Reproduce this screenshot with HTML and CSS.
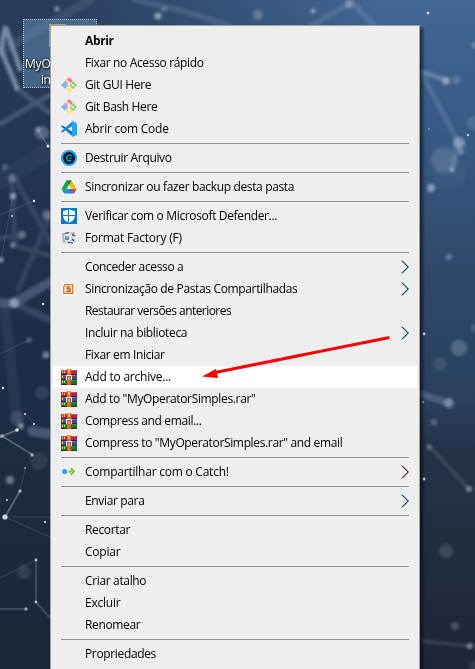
FILE: index.html
```html
<!DOCTYPE html>
<html lang="pt-BR">
<head>
<meta charset="utf-8">
<title>Menu de contexto</title>
<link rel="stylesheet" href="styles.css">
</head>
<body>
<svg class="defs" width="0" height="0">
  <defs>
    <symbol id="git" viewBox="0 0 16 16"><path fill="#ff7d7d" d="M8 0l4 4-2 2L5.500 2.500z"/><path fill="#ff7d7d" d="M4.500 3.500L7.200 6.200 6.200 7.200 3.500 4.500z"/><path fill="#80b3ff" d="M3.300 4.700L7.200 8.300 3.800 11.800 0 8z"/><path fill="#87d354" d="M12.300 4.300L16 8l-4 4-3.700-3.700z"/><path fill="#ffe680" d="M8 8.800l3.800 3.500L8 16l-3.800-3.700z"/><path d="M8.500 5v5M9.500 6l2 2" stroke="#eee" stroke-width="1" fill="none"/><circle cx="12" cy="8.200" r="1.200" fill="#eee"/><circle cx="8.300" cy="10.600" r="1" fill="#eee"/></symbol>
    <symbol id="code" viewBox="0 0 16 16"><path fill="#0078c8" d="M1.200 4.200L0 5.200l10.800 9.600L12 11.300z"/><path fill="#1a86cc" d="M1.200 11.800L0 10.600 10.800 1l1.200 3.600z"/><path fill="#25a5ee" d="M11 0l4.200 1.800.8.900v10.600l-.8.900L11 16z"/></symbol>
    <symbol id="shred" viewBox="0 0 16 16"><circle cx="8" cy="8" r="8" fill="#10a8f4"/><circle cx="8" cy="8" r="6" fill="#101820"/><path d="M10.800 6.200C9.800 4.400 6.700 4.700 5.800 7.300S7 11.800 10 10.400" fill="none" stroke="#12a9f5" stroke-width="1.300"/><path d="M8.300 8.300h2.400" stroke="#12a9f5"/></symbol>
    <symbol id="drive" viewBox="0 0 16 16"><path fill="#0fa958" d="M5.300 1.500L8 6 3.200 14.600.5 10z"/><path fill="#ffba00" d="M5.300 1.500h5.200l5 8.500H10.300z"/><path fill="#2684fc" d="M3.200 14.600L5.700 10h9.800l-2.600 4.600z"/><path fill="#00832d" d="M5.300 1.500h5.200L8 6z"/><path fill="#ea4335" d="M10.300 10h5.200l-2.600 4.600z"/><path fill="#eee" d="M8 6.200l2.200 3.800H5.700z"/></symbol>
    <symbol id="shield" viewBox="0 0 16 16"><path fill="#0078d7" d="M0 0h16v16H0z"/><path fill="#fff" d="M8 1c1.500 1.200 3.500 1.800 6 1.900v4.600c0 3.400-2.300 5.800-6 7.500-3.700-1.700-6-4.100-6-7.500V2.900C4.500 2.800 6.500 2.200 8 1z"/><path stroke="#0078d7" d="M7.500 1v14M2 7.500h12"/></symbol>
    <symbol id="factory" viewBox="0 0 16 16"><path fill="#cdd4d9" d="M1 3l4-1 9 1 1 9-3 1.500H2z"/><path fill="#a7b1b7" d="M1 3h3v9H2zM9 3l5-1-2 4z"/><circle cx="6.500" cy="7.500" r="3.600" fill="#f5f7fa"/><circle cx="6" cy="8" r="2.300" fill="#58789d"/><circle cx="6" cy="7.500" r="1" fill="#c2d9ec"/><path d="M4 3.500l4-1M10 4l4 2M11 9l2 2M7 12.500l5 .5" stroke="#3c464f" stroke-width="1.200"/><path d="M9 3l2 2M12 8l2-1" stroke="#fff"/></symbol>
    <symbol id="sync" viewBox="0 0 16 16"><path fill="#fff" d="M1 2h13v13H1z"/><path fill="#f9ead8" stroke="#e46c0a" stroke-width="1.200" d="M4.600 3.500h7.200v8.800H2.700V5.600z"/><path d="M9.400 5.900H6.300v2h2.600v2.300H5.400" fill="none" stroke="#c2560c" stroke-width="1.400"/></symbol>
    <symbol id="rar" viewBox="0 0 16 16"><path fill="#b82052" d="M0 1h16v4H0z"/><path fill="#e34b7e" d="M1 1h14v1H1z"/><path fill="#4547a8" d="M0 6h16v4H0z"/><path fill="#7779cf" d="M1 6h14v1H1z"/><path fill="#087c2c" d="M0 11h16v4H0z"/><path fill="#22a648" d="M1 11h14v1H1z"/><path fill="#30252d" d="M0 5h16v1H0zM0 10h16v1H0zM0 15h16v1H0z"/><path fill="#f2d02c" d="M1 2h1v2H1zM1 7h1v2H1zM1 12h1v2H1zM3 2h1v2H3zM3 12h1v2H3z"/><path fill="#e16a18" d="M6 0h4v16H6z"/><path fill="#f3b35e" d="M7 0h2v4H7z"/><path fill="#a95530" d="M5 6h6v5H5z"/><path d="M5.500 11V6.500h5V11M8 8v3" fill="none" stroke="#fff" stroke-width="1"/></symbol>
    <symbol id="catch" viewBox="0 0 16 16"><circle cx="3.700" cy="7.500" r="2.600" fill="#21a6ef"/><path d="M7.500 7.500H13M9.700 4.200L13 7.500l-3.300 3.300" fill="none" stroke="#80c934" stroke-width="1.900"/></symbol>
    <symbol id="chevron" viewBox="0 0 10 14"><path d="M1.200 .7L7.500 7l-6.300 6.300" fill="none" stroke="#e6b08a"/><path d="M2.500 .7L8.800 7l-6.300 6.300" fill="none" stroke="#4aa3ee"/><path d="M1.800 .7L8.100 7l-6.300 6.300" fill="none" stroke="currentColor"/></symbol>
  </defs>
</svg>

<svg class="wallpaper" viewBox="0 0 475 669" preserveAspectRatio="none">
  <defs>
    <linearGradient id="skyLeft" x1="0" y1="0" x2="0" y2="1"><stop offset="0" stop-color="#293d5c"/><stop offset=".25" stop-color="#223553"/><stop offset=".5" stop-color="#1e2e48"/><stop offset="1" stop-color="#1c2639"/></linearGradient>
    <linearGradient id="skyRight" x1="0" y1="0" x2="0" y2="1"><stop offset="0" stop-color="#426794"/><stop offset=".2" stop-color="#375a85"/><stop offset=".4" stop-color="#30496b"/><stop offset=".6" stop-color="#29405f"/><stop offset=".68" stop-color="#253248"/><stop offset="1" stop-color="#1e2636"/></linearGradient>
    <linearGradient id="fade"><stop offset=".1" stop-color="#000"/><stop offset=".8" stop-color="#fff"/></linearGradient>
    <mask id="across"><path fill="url(#fade)" d="M0 0h475v669H0z"/></mask>
    <filter id="soft" x="-20%" y="-20%" width="140%" height="140%"><feGaussianBlur stdDeviation="1.500"/></filter>
    <filter id="fine"><feGaussianBlur stdDeviation=".5"/></filter>
  </defs>
  <path fill="url(#skyLeft)" d="M0 0h475v669H0z"/>
  <path fill="url(#skyRight)" mask="url(#across)" d="M0 0h475v669H0z"/>
  <g filter="url(#soft)" stroke="#a8bdd8" fill="none" stroke-linecap="round">
    <path d="M5 28l-4 22 16 38M6 28l14 41" stroke-width="5" opacity=".6"/>
    <path d="M16 88l34 25M0 124l50-29" stroke-width="5" opacity=".24"/>
    <path d="M0 52L90 0" stroke-width="9" opacity=".13"/>
    <path d="M135 0l45 10 50 16M310 27l38-23M352 2l22 24" stroke-width="6" opacity=".18"/>
    <path d="M0 180l50-30" stroke-width="18" opacity=".06"/>
    <path d="M12 178l3 65M16 180l34 62M18 290L50 215M13 245l37 11M0 238l22-3" stroke-width="5" opacity=".15"/>
    <path d="M0 303h14l36-21" stroke-width="9" opacity=".28"/>
    <path d="M14 303l36 17" stroke-width="7" opacity=".17"/>
    <path d="M5 310l12 110" stroke-width="11" opacity=".08"/>
    <path d="M32 431l18 3" stroke-width="10" opacity=".3"/>
    <path d="M423 72l23 8" stroke-width="5" opacity=".4"/>
    <path d="M423 76l36 67-7 27" stroke-width="5" opacity=".2"/>
    <path d="M421 394l27 9" stroke-width="7" opacity=".27"/>
    <path d="M430 447l39 42M421 641l49 5" stroke-width="3" opacity=".2"/>
  </g>
  <g filter="url(#soft)" fill="#acbdd6">
    <circle cx="57" cy="9" r="2.500" opacity=".7"/><circle cx="158" cy="16" r="3.500" opacity=".75"/><circle cx="164" cy="9" r="2.500" opacity=".4"/><circle cx="258" cy="15" r="5" opacity=".35"/><circle cx="313" cy="11" r="2.500" opacity=".7"/><circle cx="349" cy="4" r="4" opacity=".5"/>
    <circle cx="42" cy="133" r="7" opacity=".35"/><circle cx="38" cy="130" r="3" opacity=".6"/>
    <circle cx="5" cy="167" r="3" opacity=".35"/><circle cx="12" cy="178" r="4" opacity=".35"/><circle cx="13" cy="196" r="3" opacity=".8"/><circle cx="47" cy="215" r="5" opacity=".4"/><circle cx="22" cy="235" r="4" opacity=".4"/><circle cx="13" cy="245" r="2.500" opacity=".6"/><circle cx="1" cy="260" r="2.500" opacity=".8"/><circle cx="14" cy="303" r="5" opacity=".6"/>
    <circle cx="29" cy="340" r="2.500" opacity=".45"/><circle cx="46" cy="355" r="3.500" opacity=".6"/><circle cx="42" cy="393" r="7" opacity=".15"/><circle cx="17" cy="418" r="7" opacity=".18"/><circle cx="21" cy="426" r="3" opacity=".7"/><circle cx="39" cy="461" r="9" opacity=".12"/><circle cx="10" cy="480" r="4" opacity=".55"/><circle cx="24" cy="572" r="7" opacity=".16"/>
    <circle cx="446" cy="81" r="4" opacity=".6"/><circle cx="456" cy="80" r="4" opacity=".3"/><circle cx="459" cy="143" r="6" opacity=".6"/><circle cx="461" cy="152" r="3" opacity=".5"/><circle cx="444" cy="160" r="13" opacity=".22"/><circle cx="450" cy="174" r="16" opacity=".05"/><circle cx="452" cy="170" r="2" opacity=".8"/><circle cx="431" cy="188" r="4" opacity=".7"/><circle cx="474" cy="123" r="7" opacity=".2"/><circle cx="475" cy="45" r="3" opacity=".5"/>
    <circle cx="449" cy="257" r="3" opacity=".45"/><circle cx="459" cy="348" r="8" opacity=".3"/><circle cx="440" cy="364" r="7" opacity=".14"/><circle cx="475" cy="328" r="4" opacity=".25"/><circle cx="449" cy="403" r="5" opacity=".5"/><circle cx="434" cy="422" r="3" opacity=".4"/><circle cx="429" cy="447" r="2.500" opacity=".5"/><circle cx="469" cy="489" r="3" opacity=".6"/><circle cx="446" cy="551" r="7" opacity=".2"/><circle cx="455" cy="626" r="4" opacity=".28"/><circle cx="470" cy="646" r="3" opacity=".6"/><circle cx="475" cy="666" r="6" opacity=".15"/>
  </g>
  <g filter="url(#fine)" stroke="#98a7be" fill="none">
    <path d="M0 215l34-14M13 196L1 260M0 354l29-14M25 413l9 11" opacity=".22"/>
    <path d="M0 437l17-7M2 436l31 19M5 517l15-26" stroke-width="2" opacity=".45"/><path d="M20 491l6-25M5 517h45M5 517l45 20M0 578l36-18" opacity=".22"/><path d="M36 560v42l14 16M0 609h26" stroke-width="2" opacity=".27"/>
    <path d="M38 130l10 16" opacity=".5"/>
  </g>
  <g filter="url(#fine)" fill="#dbe5f2">
    <circle cx="48" cy="146" r="1.500"/><circle cx="34" cy="201" r="1.200"/><circle cx="12" cy="216" r=".9"/><circle cx="43" cy="304" r="1.200"/><circle cx="3" cy="388" r="1.200"/><circle cx="25" cy="414" r="1"/><circle cx="34" cy="424" r="1"/><circle cx="17" cy="430" r="1.800"/><circle cx="2" cy="436" r="2" opacity=".5"/><circle cx="32" cy="455" r="1.800" opacity=".6"/><circle cx="25" cy="468" r="1" opacity=".6"/><circle cx="20" cy="491" r="1.800" opacity=".6"/><circle cx="7" cy="500" r=".9"/><circle cx="5" cy="517" r="2.600" opacity=".9"/><circle cx="45" cy="522" r="1.100"/><circle cx="36" cy="560" r="1.400" opacity=".8"/><circle cx="36" cy="602" r="1.400" opacity=".8"/><circle cx="26" cy="609" r="1.700" opacity=".6"/>
    <circle cx="428" cy="13" r="1.300"/><circle cx="468" cy="135" r="1.300" opacity=".8"/><circle cx="424" cy="334" r="1.400"/><circle cx="423" cy="402" r="1.300" opacity=".5"/><circle cx="424" cy="479" r="1.400"/><circle cx="429" cy="129" r="1" opacity=".4"/>
  </g>
</svg>

<div class="shortcut"><span class="folder"></span><span class="label">MyO</span><span class="label second">in</span></div>

<nav class="menu">
  <div class="item default"><i></i><span>Abrir</span></div>
  <div class="item"><i></i><span>Fixar no Acesso rápido</span></div>
  <div class="item"><svg><use href="#git"/></svg><span>Git GUI Here</span></div>
  <div class="item"><svg><use href="#git"/></svg><span>Git Bash Here</span></div>
  <div class="item wide"><svg><use href="#code"/></svg><span>Abrir com Code</span></div>
  <hr>
  <div class="item"><svg><use href="#shred"/></svg><span>Destruir Arquivo</span></div>
  <hr>
  <div class="item"><svg><use href="#drive"/></svg><span>Sincronizar ou fazer backup desta pasta</span></div>
  <hr>
  <div class="item"><svg><use href="#shield"/></svg><span>Verificar com o Microsoft Defender...</span></div>
  <div class="item wide"><svg><use href="#factory"/></svg><span>Format Factory (F)</span></div>
  <hr>
  <div class="item"><i></i><span>Conceder acesso a</span><svg class="chevron"><use href="#chevron"/></svg></div>
  <div class="item"><svg><use href="#sync"/></svg><span>Sincronização de Pastas Compartilhadas</span><svg class="chevron"><use href="#chevron"/></svg></div>
  <div class="item tight"><i></i><span>Restaurar versões anteriores</span></div>
  <div class="item"><i></i><span>Incluir na biblioteca</span><svg class="chevron"><use href="#chevron"/></svg></div>
  <div class="item"><i></i><span>Fixar em Iniciar</span></div>
  <div class="item selected wide"><svg><use href="#rar"/></svg><span>Add to archive...</span></div>
  <div class="item"><svg><use href="#rar"/></svg><span>Add to "MyOperatorSimples.rar"</span></div>
  <div class="item"><svg><use href="#rar"/></svg><span>Compress and email...</span></div>
  <div class="item"><svg><use href="#rar"/></svg><span>Compress to "MyOperatorSimples.rar" and email</span></div>
  <hr>
  <div class="item wide"><svg><use href="#catch"/></svg><span>Compartilhar com o Catch!</span><svg class="chevron red"><use href="#chevron"/></svg></div>
  <hr>
  <div class="item"><i></i><span>Enviar para</span><svg class="chevron"><use href="#chevron"/></svg></div>
  <hr>
  <div class="item"><i></i><span>Recortar</span></div>
  <div class="item wide"><i></i><span>Copiar</span></div>
  <hr>
  <div class="item"><i></i><span>Criar atalho</span></div>
  <div class="item wide"><i></i><span>Excluir</span></div>
  <div class="item"><i></i><span>Renomear</span></div>
  <hr>
  <div class="item"><i></i><span>Propriedades</span></div>
</nav>

<svg class="pointer" viewBox="0 0 190 46"><path d="M187.300 2.700L14 37.500" stroke="#f00" stroke-width="3" stroke-linecap="round"/><path d="M1 41.500l14-7.500L17 43z" fill="#f00"/></svg>
</body>
</html>
```
FILE: styles.css
```css
* { box-sizing: border-box; }

body {
  margin: 0;
  height: 669px;
  overflow: hidden;
  position: relative;
  background: #1e2b43;
  font: 12px/17px "Open Sans", "Noto Sans", sans-serif;
  color: #000;
}

.defs { position: absolute; }

.wallpaper {
  position: absolute;
  inset: 0;
  width: 475px;
  height: 669px;
}

.shortcut {
  position: absolute;
  left: 23px;
  top: 19px;
  width: 74px;
  height: 69px;
  border: 1px dotted #a9bccb;
  background: rgba(105, 155, 190, .45);
  color: #fff;
}

.shortcut .folder {
  display: block;
  width: 17px;
  height: 23px;
  margin: 4px 0 9px 25px;
  background: #a99d72;
}

.shortcut .label {
  display: block;
  padding-left: 1px;
  line-height: 16px;
  letter-spacing: -.2px;
  text-shadow: 1px 1px 2px #000, 0 0 2px #000;
}

.shortcut .second {
  padding-left: 17px;
  letter-spacing: -.6px;
}

.menu {
  position: absolute;
  left: 50px;
  top: 25px;
  width: 370px;
  height: 660px;
  padding: 4px 2px;
  border: 1px solid #a0a0a0;
  background: #eee;
  box-shadow: 3px 3px 3px rgba(0, 0, 0, .55);
}

.item {
  display: flex;
  align-items: center;
  height: 22px;
  padding: 0 8px;
  white-space: nowrap;
  letter-spacing: -.35px;
}

.item > span {
  align-self: flex-start;
  padding-top: 2px;
}

.item > i,
.item > svg {
  flex: none;
  width: 16px;
  height: 16px;
  margin-right: 8px;
}

.item > .chevron {
  width: 10px;
  height: 14px;
  margin: 0 -1px 0 auto;
  color: #123a6b;
}

.item > .chevron.red { color: #8a1420; }

.wide { letter-spacing: -.23px; }

.tight { letter-spacing: -.55px; }

.default { font-weight: 700; }

.selected { background: #fff; }

.menu hr {
  height: 1px;
  margin: 3px 8px;
  border: 0;
  background: #919191;
}

.pointer {
  position: absolute;
  left: 201px;
  top: 335px;
  width: 190px;
  height: 46px;
}
```
